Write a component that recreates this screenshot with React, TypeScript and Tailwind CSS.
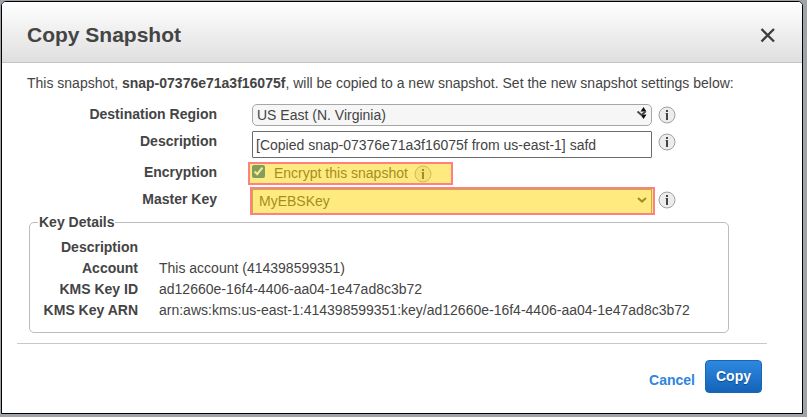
import { useState, type ReactNode } from "react";

const KEY_DETAILS = [
  { label: "Description", value: "" },
  { label: "Account", value: "This account (414398599351)" },
  { label: "KMS Key ID", value: "ad12660e-16f4-4406-aa04-1e47ad8c3b72" },
  {
    label: "KMS Key ARN",
    value:
      "arn:aws:kms:us-east-1:414398599351:key/ad12660e-16f4-4406-aa04-1e47ad8c3b72",
  },
];

function InfoIcon() {
  return (
    <svg viewBox="0 0 18 18" className="size-[18px] shrink-0" aria-hidden>
      <circle cx="9" cy="9" r="8" fill="#ececec" stroke="#a0a0a0" />
      <path d="M8 4h2v2H8zM8 7h2v7H8z" fill="#444" />
      <path d="M7 7h1v1H7z" fill="#b0b0b0" />
    </svg>
  );
}

function Highlight({ className }: { className: string }) {
  return (
    <div
      className={`pointer-events-none absolute border-2 border-[#ff8080] bg-[#ffd500]/50 bg-clip-padding ${className}`}
      aria-hidden
    />
  );
}

function Field({
  id,
  label,
  children,
}: {
  id: string;
  label: string;
  children: ReactNode;
}) {
  return (
    <div className="flex items-start">
      <label htmlFor={id} className="w-[190px] shrink-0 text-right font-bold leading-[21px]">
        {label}
      </label>
      <div className="ml-[35px] flex min-w-0 flex-1 items-start gap-1.5">{children}</div>
    </div>
  );
}

export default function App() {
  const [description, setDescription] = useState(
    "[Copied snap-07376e71a3f16075f from us-east-1] safd",
  );
  const [encrypted, setEncrypted] = useState(true);

  return (
    <div className="bg-[#9fa4aa] pb-[3px] pl-px pr-1 pt-px font-['Liberation_Sans',Arial,sans-serif] text-[14px] text-[#444]">
      <div
        role="dialog"
        aria-labelledby="dialog-title"
        className="overflow-hidden rounded-t-[5px] border border-black bg-white"
      >
        <header className="flex h-[61px] items-center justify-between border-b border-[#c4c4c4] bg-linear-to-b from-white to-[#dfdfdf] px-[25px] pt-1.5">
          <h1 id="dialog-title" className="text-[21px] font-bold leading-7">
            Copy Snapshot
          </h1>
          <button type="button" aria-label="Close" className="p-px">
            <svg viewBox="0 0 16 16" className="size-4" aria-hidden>
              <path d="M1.5 2l12.5 12.5M14 2L1.5 14.5" stroke="#3c3c3c" strokeWidth="2.3" />
            </svg>
          </button>
        </header>

        <form onSubmit={(e) => e.preventDefault()}>
          <p className="px-[25px] pt-2.5 leading-5">
            This snapshot, <b>snap-07376e71a3f16075f</b>, will be copied to a new snapshot. Set
            the new snapshot settings below:
          </p>

          <div className="mt-[11px] flex flex-col gap-1 pl-[25px] pr-[126px]">
            <Field id="region" label="Destination Region">
              <div className="relative h-[23px] min-w-0 flex-1">
                <select
                  id="region"
                  className="block h-[22px] w-full appearance-none rounded-[5px] border border-[#a6a6a6] bg-[#f6f6f6] pl-1"
                >
                  <option>US East (N. Virginia)</option>
                </select>
                <svg
                  viewBox="0 0 12 14"
                  className="pointer-events-none absolute right-1 top-0.5 h-3.5 w-3"
                  aria-hidden
                >
                  <path d="M7.5 1l3 4.5h-6zM7.5 13l3-4.5h-6z" fill="#111" />
                  <path d="M1.5 5.5l4 3.5 4-3.5" fill="none" stroke="#444" strokeWidth="1.8" />
                </svg>
              </div>
              <span className="pt-0.5">
                <InfoIcon />
              </span>
            </Field>

            <Field id="description" label="Description">
              <input
                id="description"
                type="text"
                value={description}
                onChange={(e) => setDescription(e.target.value)}
                className="h-[27px] min-w-0 flex-1 rounded-[1px] border border-[#6b6b6b] bg-white px-[3px]"
              />
              <span className="pt-0.5">
                <InfoIcon />
              </span>
            </Field>

            <Field id="encryption" label="Encryption">
              <div className="relative flex h-[23px] w-[200px] items-center gap-1.5">
                <input
                  id="encryption"
                  type="checkbox"
                  checked={encrypted}
                  onChange={(e) => setEncrypted(e.target.checked)}
                  className="mb-1 size-[13px] accent-[#0067c0]"
                />
                <label htmlFor="encryption" className="pl-[3px]">
                  Encrypt this snapshot
                </label>
                <InfoIcon />
                <Highlight className="-left-1 -right-px top-0 bottom-0" />
              </div>
            </Field>

            <Field id="master-key" label="Master Key">
              <div className="relative min-w-0 flex-1">
                <select
                  id="master-key"
                  className="block h-[25px] w-full appearance-none border border-[#888] bg-white pl-1.5"
                >
                  <option>MyEBSKey</option>
                </select>
                <svg
                  viewBox="0 0 10 6"
                  className="pointer-events-none absolute right-[5px] top-2 h-1.5 w-2.5"
                  aria-hidden
                >
                  <path d="M1 1l4 3.6L9 1" fill="none" stroke="#444" strokeWidth="2" />
                </svg>
                <Highlight className="-left-0.5 -right-[3px] -top-0.5 -bottom-px" />
              </div>
              <span className="pt-0.5">
                <InfoIcon />
              </span>
            </Field>
          </div>

          <fieldset className="ml-[27px] mr-[73px] rounded-[5px] border border-[#bcbcbc] pb-[11px] pl-2">
            <legend className="px-px font-bold leading-4">Key Details</legend>
            <dl className="grid grid-cols-[100px_1fr] gap-x-[21px] pt-[7px] leading-[21px]">
              {KEY_DETAILS.map((d) => (
                <div key={d.label} className="contents">
                  <dt className="text-right font-bold">{d.label}</dt>
                  <dd>{d.value}</dd>
                </div>
              ))}
            </dl>
          </fieldset>

          <footer className="ml-[15px] mr-[35px] mt-2.5 flex items-start justify-end gap-2.5 border-t border-[#c8c8c8] pb-5 pr-[5px] pt-4">
            <a href="#" className="pt-2.5 font-bold leading-5 text-[#2e85de]">
              Cancel
            </a>
            <button
              type="submit"
              className="h-[33px] w-[57px] rounded-[4px] border border-[#1667b7] bg-linear-to-b from-[#2e88e0] to-[#1464b8] font-bold text-white [text-shadow:0_1px_1px_#0b4a8c]"
            >
              Copy
            </button>
          </footer>
        </form>
      </div>
    </div>
  );
}
